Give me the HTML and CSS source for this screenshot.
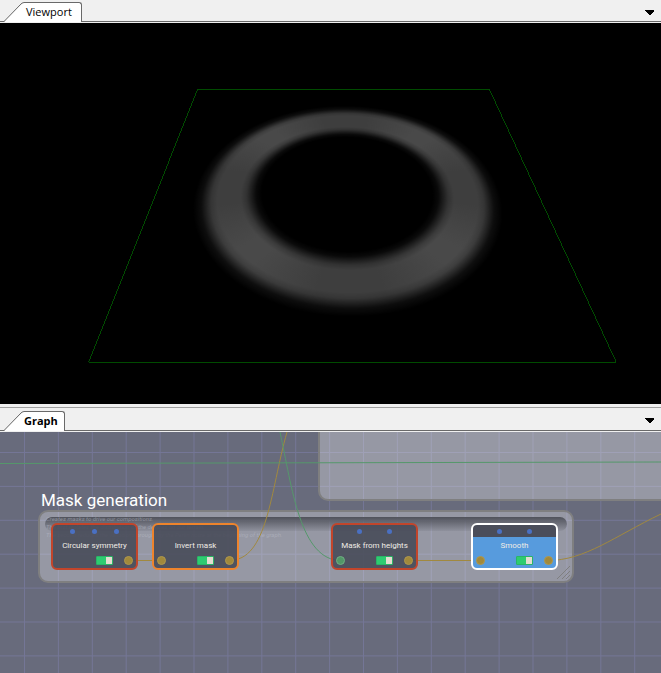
FILE: index.html
```html
<!DOCTYPE html>
<html lang="en">
<head>
<meta charset="utf-8">
<title>Terrain editor</title>
<link rel="stylesheet" href="styles.css">
</head>
<body>
<main class="workspace">
  <section class="panel">
    <header class="bar">
      <button class="tab" type="button">
        <svg class="slant" width="20" height="20" viewBox="0 0 20 20"><path class="slant-fill" d="M0 20 L17 3 Q20 0 20 0 V20Z"/><path class="slant-line" d="M0 19.5 L16 3 Q18 .5 20 .5"/></svg>
        <span class="tab-label">Viewport</span>
      </button>
      <button class="more" type="button" aria-label="Viewport options"><svg width="9" height="5" viewBox="0 0 9 5" shape-rendering="crispEdges"><path d="M0 0H9V1L5 5H4L0 1Z"/></svg></button>
    </header>
    <div class="scene">
      <div class="plane"></div>
      <svg class="frame" viewBox="0 0 661 381"><path d="M197.500 66.500H489.500L616.500 339.500H88.500Z"/></svg>
    </div>
  </section>

  <section class="panel panel-graph">
    <header class="bar">
      <button class="tab tab-active" type="button">
        <svg class="slant" width="20" height="20" viewBox="0 0 20 20"><path class="slant-fill" d="M0 20 L17 3 Q20 0 20 0 V20Z"/><path class="slant-line" d="M0 19.5 L16 3 Q18 .5 20 .5"/></svg>
        <span class="tab-label">Graph</span>
      </button>
      <button class="more" type="button" aria-label="Graph options"><svg width="9" height="5" viewBox="0 0 9 5" shape-rendering="crispEdges"><path d="M0 0H9V1L5 5H4L0 1Z"/></svg></button>
    </header>
    <div class="graph">
      <svg class="layer" width="100%" height="100%">
        <defs>
          <pattern id="grid" x="24" y="20" width="33.9" height="33.9" patternUnits="userSpaceOnUse"><path class="grid-line" d="M.5 0V34M0 .5H34"/></pattern>
        </defs>
        <rect width="100%" height="100%" fill="url(#grid)"/>
      </svg>

      <div class="group group-upper"></div>
      <h2 class="group-title">Mask generation</h2>
      <div class="group group-mask">
        <div class="group-shade"></div>
        <p class="note">Creates masks to drive our compositions.<br>The first isolates the distribution of the devices on our terrain.<br>The second reduces the variations brought by the Perlin noise at the beginning of the graph.</p>
        <svg class="grip" width="16" height="16" viewBox="0 0 16 16"><path d="M1 14 14 1M6 14 14 6M10 14 14 10"/></svg>
      </div>

      <svg class="layer" width="100%" height="100%">
        <path class="wire wire-mask" d="M128 128.500H162M408 128.500H480"/>
        <path class="wire wire-mask" d="M229 128.500C268 128.500 270 60 287 0"/>
        <path class="wire wire-mask" d="M548 128.500C585 128.500 615 104 661 82"/>
        <path class="wire wire-height" d="M280 0C292 55 300 128.500 341 128.500"/>
        <path class="wire wire-height" d="M0 31.500L661 30"/>
      </svg>

      <article class="node node-red node-symmetry">
        <div class="pins"><i></i><i></i><i></i></div>
        <label class="node-name" for="n1">Circular symmetry</label>
        <div class="ports"><span class="port port-none"></span><input class="toggle" type="checkbox" id="n1" checked><span class="port"></span></div>
      </article>
      <article class="node node-orange node-invert">
        <div class="pins"></div>
        <label class="node-name" for="n2">Invert mask</label>
        <div class="ports"><span class="port"></span><input class="toggle" type="checkbox" id="n2" checked><span class="port"></span></div>
      </article>
      <article class="node node-red node-heights">
        <div class="pins"><i></i><i></i></div>
        <label class="node-name" for="n3">Mask from heights</label>
        <div class="ports"><span class="port port-green"></span><input class="toggle" type="checkbox" id="n3" checked><span class="port"></span></div>
      </article>
      <article class="node node-selected node-smooth">
        <div class="pins"><i></i><i></i></div>
        <label class="node-name" for="n4">Smooth</label>
        <div class="ports"><span class="port"></span><input class="toggle" type="checkbox" id="n4" checked><span class="port"></span></div>
      </article>
    </div>
  </section>
</main>
</body>
</html>
```
FILE: styles.css
```css
* { box-sizing: border-box; }

body {
  margin: 0;
  background: #f0f0f0;
  font-family: "Open Sans", "Noto Sans", sans-serif;
  font-size: 11px;
}

.workspace {
  display: grid;
  grid-template-rows: 3fr 2fr;
  height: 100vh;
}

.panel {
  display: flex;
  flex-direction: column;
  min-height: 0;
}

.panel-graph {
  padding-top: 3px;
}

.panel-graph .bar {
  height: 25px;
  border-top: 1px solid #a0a0a0;
}

/* Tab bar */
.bar {
  display: flex;
  flex: none;
  align-items: flex-end;
  justify-content: space-between;
  height: 23px;
  padding: 0 7px 1px 4px;
  background: linear-gradient(#696969, #696969) 0 calc(100% - 1px) / 100% 1px no-repeat #f0f0f0;
}

.tab {
  display: flex;
  height: 20px;
  padding: 0;
  border: 0;
  background: none;
  color: #000;
  font: inherit;
}

.tab-active { font-weight: 700; }

.slant { display: block; }
.slant-fill { fill: #fff; }
.slant-line { fill: none; stroke: #696969; }

.tab-label {
  height: 20px;
  padding: 0 9px 0 2px;
  border: 1px solid #696969;
  border-width: 1px 1px 0 0;
  border-radius: 0 3px 0 0;
  background: #fff;
  line-height: 17px;
}

.tab-active .tab-label { padding: 0 6px 0 0; }

.more {
  padding: 0;
  border: 0;
  background: none;
  line-height: 0;
  height: 16px;
}

.more svg { display: block; margin-bottom: 4px; }

/* 3D preview */
.scene {
  position: relative;
  flex: 1;
  overflow: hidden;
  background: #000;
}

.plane {
  position: absolute;
  top: calc(50% - 214px);
  left: calc(50% - 172px);
  width: 376px;
  height: 376px;
  background: conic-gradient(#3e3e3e 12deg, #494949 40deg 50deg, #3e3e3e 78deg 102deg, #494949 130deg 140deg, #3e3e3e 168deg 192deg, #494949 220deg 230deg, #3e3e3e 258deg 282deg, #494949 310deg 320deg, #3e3e3e 348deg);
  mask: radial-gradient(circle closest-side, transparent 45%, rgba(0, 0, 0, .15) 48%, rgba(0, 0, 0, .8) 53%, #000 56%, #000 68%, rgba(0, 0, 0, .85) 71%, rgba(0, 0, 0, .2) 76%, transparent 80%);
  transform: matrix3d(1, 0, 0, 0, .022, .664, 0, -.00153, 0, 0, 1, 0, 0, 0, 0, 1);
}

.frame {
  position: absolute;
  inset: 0;
  width: 100%;
  height: 100%;
}

.frame path {
  fill: none;
  stroke: #004b00;
  shape-rendering: crispEdges;
}

/* Node graph */
.graph {
  position: relative;
  flex: 1;
  overflow: hidden;
  background: #686b7c;
}

.layer {
  position: absolute;
  inset: 0;
}

.grid-line { fill: none; stroke: #747696; }

.wire { fill: none; }
.wire-mask { stroke: #a1893f; }
.wire-height { stroke: #55986b; }

.group {
  position: absolute;
  border: 2px solid #7f7f80;
  border-radius: 10px;
  background: rgba(255, 255, 255, .31);
}

.group-upper {
  top: -40px;
  left: 318px;
  right: -20px;
  height: 109px;
}

.group-mask {
  top: 78px;
  left: 38px;
  width: 536px;
  height: 73px;
}

.group-title {
  position: absolute;
  top: 56px;
  left: 41px;
  margin: 0;
  color: #fff;
  font: 400 17px/24px "Roboto", sans-serif;
  white-space: nowrap;
}

.group-shade {
  height: 14px;
  margin: 5px 5px 0;
  border-radius: 7px;
  background: linear-gradient(#50525b, rgba(80, 82, 91, .1));
}

.note {
  position: absolute;
  top: 3px;
  left: 6px;
  margin: 0;
  color: rgba(190, 192, 204, .5);
  font: italic 6px/8px "Roboto", sans-serif;
  white-space: nowrap;
}

.grip {
  position: absolute;
  right: 0;
  bottom: 0;
  fill: none;
  stroke: #7f7f80;
}

.node {
  position: absolute;
  top: 91px;
  width: 87px;
  height: 47px;
  border: 2px solid #c2452b;
  border-radius: 6px;
  background: rgba(70, 73, 86, .88);
}

.node-symmetry { left: 51px; }
.node-invert { left: 152px; }
.node-heights { left: 331px; }
.node-smooth { left: 471px; }

.node-orange { border-color: #ee842c; }
.node-selected {
  border-color: #fff;
  background: linear-gradient(#4a4d5a 12px, #579bdd 12px);
}

.pins {
  display: flex;
  justify-content: space-evenly;
  height: 12px;
  padding-top: 4px;
}

.pins i {
  width: 5px;
  height: 5px;
  border-radius: 50%;
  background: #4a70c2;
}

.node-name {
  display: block;
  height: 16px;
  color: #f0ece6;
  font: 8px/17px "Roboto", sans-serif;
  text-align: center;
  white-space: nowrap;
}

.ports {
  display: flex;
  align-items: center;
  height: 15px;
  padding: 0 3px;
}

.port {
  width: 9px;
  height: 9px;
  border: 1px solid #b0984c;
  border-radius: 50%;
  background: #a1893b;
}

.port-none { visibility: hidden; }

.port-green {
  border-color: #6fae83;
  background: #529767;
}

.toggle {
  width: 17px;
  height: 9px;
  margin: 0 11px 0 auto;
  border: 1px solid #2ab566;
  border-radius: 1px;
  background: linear-gradient(#e4dcd0, #e4dcd0) 9px 0 / 6px 7px no-repeat #2ecc71;
  appearance: none;
}
```
